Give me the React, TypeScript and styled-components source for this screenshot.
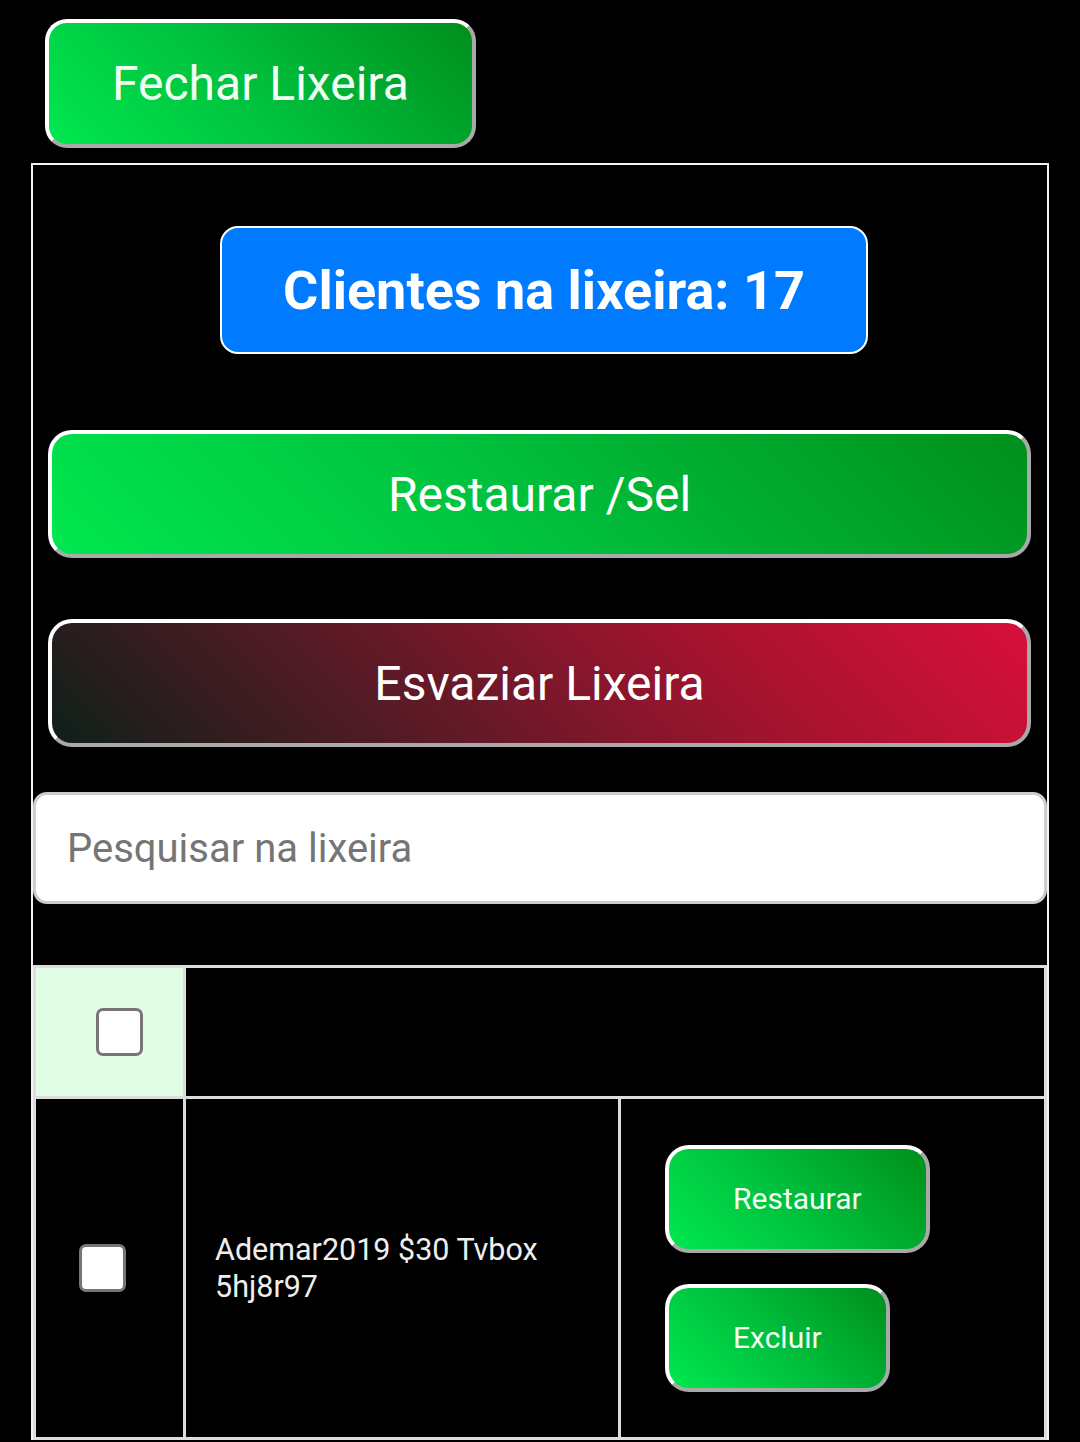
import React from "react";
import styled, { createGlobalStyle, css } from "styled-components";

const GlobalStyle = createGlobalStyle`
  html, body {
    margin: 0;
    padding: 0;
    background: #000;
    font-family: Roboto, "Noto Sans", "Liberation Sans", sans-serif;
  }
  * { box-sizing: border-box; }
`;

const Page = styled.div`
  padding: 19px 31px 0;
  display: flex;
  flex-direction: column;
`;

const bevel = css`
  border: 4px solid;
  border-color: #ffffff #a9a9a9 #a9a9a9 #ffffff;
`;

const greenFill = css`
  background: linear-gradient(45deg, #00e84f 0%, #00c23e 45%, #008f1c 100%);
`;

const CloseButton = styled.button`
  ${bevel};
  ${greenFill};
  align-self: flex-start;
  margin-left: 14px;
  height: 129px;
  padding: 0 63px;
  border-radius: 22px;
  color: #f2fff4;
  font-family: inherit;
  font-size: 48px;
  font-weight: 400;
`;

const Panel = styled.section`
  margin-top: 15px;
  border: 2px solid #f4f4f4;
  border-bottom: none;
  display: flex;
  flex-direction: column;
  align-items: stretch;
`;

const CountBadge = styled.div`
  align-self: center;
  margin: 61px 0 0 8px;
  height: 128px;
  padding: 0 61px;
  display: flex;
  align-items: center;
  justify-content: center;
  background: #007bff;
  border: 2px solid #ffffff;
  border-radius: 18px;
  color: #ffffff;
  font-size: 54px;
  font-weight: 700;
`;

const WideButton = styled.button<{ $variant: "green" | "red"; $gap: number }>`
  ${bevel};
  margin: ${(p) => p.$gap}px 16px 0 15px;
  height: 128px;
  border-radius: 24px;
  color: #ffffff;
  font-family: inherit;
  font-size: 48px;
  font-weight: 400;
  ${(p) =>
    p.$variant === "green"
      ? greenFill
      : css`
          background: linear-gradient(45deg, #0e2019 0%, #5a1a26 35%, #a8132f 70%, #d90f3a 100%);
        `}
`;

const SearchInput = styled.input`
  margin-top: 45px;
  height: 112px;
  width: 100%;
  padding: 0 31px;
  background: #ffffff;
  border: 3px solid #cccccc;
  border-radius: 14px;
  font-family: inherit;
  font-size: 40px;
  color: #222;
  outline: none;
  &::placeholder {
    color: #757575;
  }
`;

const Table = styled.table`
  margin-top: 61px;
  width: 100%;
  border-collapse: collapse;
  table-layout: fixed;
  color: #eeeeee;
`;

const Cell = styled.td<{ $bg?: string; $height: number; $padLeft: number }>`
  border: 3px solid #dddddd;
  height: ${(p) => p.$height}px;
  padding: 0 0 0 ${(p) => p.$padLeft}px;
  vertical-align: middle;
  background: ${(p) => p.$bg ?? "transparent"};
`;

const Check = styled.input.attrs({ type: "checkbox" })`
  appearance: none;
  -webkit-appearance: none;
  display: block;
  margin: 0;
  width: 47px;
  height: 48px;
  background: #ffffff;
  border: 3px solid #767676;
  border-radius: 7px;
`;

const ClientName = styled.div`
  font-size: 30.5px;
  line-height: 37px;
  color: #eeeeee;
  padding-right: 30px;
`;

const ActionStack = styled.div`
  display: flex;
  flex-direction: column;
  align-items: flex-start;
  gap: 31px;
`;

const SmallButton = styled.button`
  ${bevel};
  ${greenFill};
  height: 108px;
  padding: 0 64px;
  border-radius: 24px;
  color: #f2fff4;
  font-family: inherit;
  font-size: 30px;
  font-weight: 400;
`;

const rows = [{ id: 1, name: "Ademar2019 $30 Tvbox 5hj8r97" }];

export default function App() {
  return (
    <>
      <GlobalStyle />
      <Page>
        <CloseButton>Fechar Lixeira</CloseButton>
        <Panel>
          <CountBadge>Clientes na lixeira: 17</CountBadge>
          <WideButton $variant="green" $gap={76}>
            Restaurar /Sel
          </WideButton>
          <WideButton $variant="red" $gap={61}>
            Esvaziar Lixeira
          </WideButton>
          <SearchInput placeholder="Pesquisar na lixeira" />
          <Table>
            <colgroup>
              <col style={{ width: 150 }} />
              <col style={{ width: 435 }} />
              <col />
            </colgroup>
            <tbody>
              <tr>
                <Cell $bg="#e1fde5" $height={131} $padLeft={60}>
                  <Check />
                </Cell>
                <Cell colSpan={2} $height={131} $padLeft={0} />
              </tr>
              {rows.map((r) => (
                <tr key={r.id}>
                  <Cell $height={341} $padLeft={43}>
                    <Check />
                  </Cell>
                  <Cell $height={341} $padLeft={29}>
                    <ClientName>{r.name}</ClientName>
                  </Cell>
                  <Cell $height={341} $padLeft={44}>
                    <ActionStack>
                      <SmallButton>Restaurar</SmallButton>
                      <SmallButton>Excluir</SmallButton>
                    </ActionStack>
                  </Cell>
                </tr>
              ))}
            </tbody>
          </Table>
        </Panel>
      </Page>
    </>
  );
}
